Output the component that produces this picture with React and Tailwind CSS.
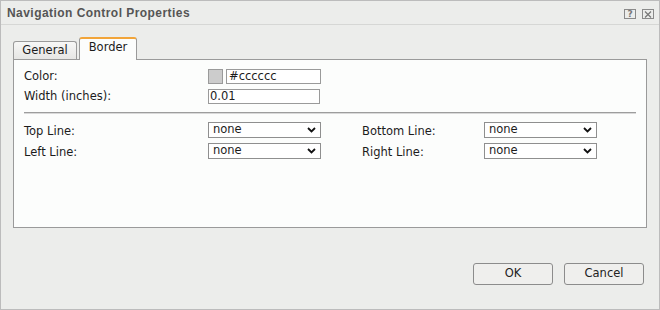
import React from "react";

// -----------------------------------------------------------------------------
// Small select look-alike with a bold chevron
// -----------------------------------------------------------------------------
const FakeSelect = ({ value, width }) => (
  <div
    className={`h-[16px] ${width} border border-[#8f8f8f] bg-white flex items-center justify-between pl-[4px] pr-[4px]`}
  >
    <span className="leading-none">{value}</span>
    <svg width="9" height="6" viewBox="0 0 9 6">
      <path d="M1 1 L4.5 4.5 L8 1" fill="none" stroke="#111" strokeWidth="1.8" />
    </svg>
  </div>
);

const App = () => {
  return (
    <div
      className="w-[660px] h-[310px] bg-[#ecedeb] border border-[#bcbcbc] flex flex-col text-[11.5px] text-[#1c1c1c]"
      style={{ fontFamily: '"DejaVu Sans", Verdana, sans-serif' }}
    >
      {/* Title bar */}
      <div className="h-[24px] shrink-0 border-b border-[#d6d7d5] flex items-center justify-between pl-[6px] pr-[4px]">
        <span
          className="font-bold text-[12px] tracking-[0.45px] text-[#555555]"
          style={{ fontFamily: '"Liberation Sans", Arial, sans-serif' }}
        >
          Navigation Control Properties
        </span>
        <div className="flex gap-[6px] items-center mt-[3px] mr-[1px]">
          <div className="w-[12px] h-[10px] border border-[#8a8a8a] flex items-center justify-center text-[9px] font-bold text-[#777] leading-none">
            ?
          </div>
          <div className="w-[12px] h-[10px] border border-[#8a8a8a] flex items-center justify-center">
            <svg width="8" height="7" viewBox="0 0 8 7">
              <path d="M1 0.5 L7 6.5 M7 0.5 L1 6.5" stroke="#777" strokeWidth="1.2" />
            </svg>
          </div>
        </div>
      </div>

      {/* Body */}
      <div className="px-[12px] flex flex-col">
        {/* Tabs */}
        <div className="flex items-end gap-[2px] mt-[12px] relative z-10">
          <div className="w-[64px] h-[18px] border border-b-0 border-[#9a9a9a] rounded-t-[3px] bg-gradient-to-b from-[#f7f7f6] to-[#e6e6e4] flex items-center justify-center pt-[1px]">
            General
          </div>
          <div className="w-[58px] h-[23px] -mb-px border-x border-[#9a9a9a] border-t-2 border-t-[#f2a53a] rounded-t-[3px] bg-[#fcfdfc] flex items-center justify-center pb-[3px]">
            Border
          </div>
        </div>

        {/* Panel */}
        <div className="h-[169px] border border-[#9a9a9a] bg-[#fcfdfc] pl-[10px] pr-[10px] pt-[9px]">
          <div className="flex items-center h-[15px]">
            <span className="w-[184px] pt-[1px]">Color:</span>
            <div className="w-[15px] h-[15px] border border-[#9a9a9a] bg-[#cccccc]" />
            <div className="ml-[3px] w-[95px] h-[15px] border border-[#9a9a9a] bg-white pl-[2px] flex items-center leading-none">
              #cccccc
            </div>
          </div>
          <div className="flex items-center h-[15px] mt-[5px]">
            <span className="w-[184px] pt-[1px]">Width (inches):</span>
            <div className="w-[112px] h-[15px] border border-[#9a9a9a] bg-white pl-[1px] flex items-center leading-none">
              0.01
            </div>
          </div>

          {/* Separator */}
          <div className="mt-[8px] border-t border-[#9d9d9d] border-b border-b-[#d9d9d9]" />

          <div className="grid grid-cols-[184px_113px_41px_122px_113px] auto-rows-[16px] mt-[8px] gap-y-[5px] items-center leading-[16px]">
            <span className="pt-[2px]">Top Line:</span>
            <FakeSelect value="none" width="w-[113px]" />
            <span />
            <span className="pt-[2px]">Bottom Line:</span>
            <FakeSelect value="none" width="w-[113px]" />
            <span className="pt-[2px]">Left Line:</span>
            <FakeSelect value="none" width="w-[113px]" />
            <span />
            <span className="pt-[2px]">Right Line:</span>
            <FakeSelect value="none" width="w-[113px]" />
          </div>
        </div>

        {/* Buttons */}
        <div className="flex justify-end gap-[11px] mt-[35px] pr-[3px]">
          <button className="w-[80px] h-[22px] border border-[#8c8c8c] rounded-[3px] bg-[#efefed] text-[11.5px] text-[#222]">
            OK
          </button>
          <button className="w-[80px] h-[22px] border border-[#8c8c8c] rounded-[3px] bg-[#efefed] text-[11.5px] text-[#222]">
            Cancel
          </button>
        </div>
      </div>
    </div>
  );
};

export default App;
